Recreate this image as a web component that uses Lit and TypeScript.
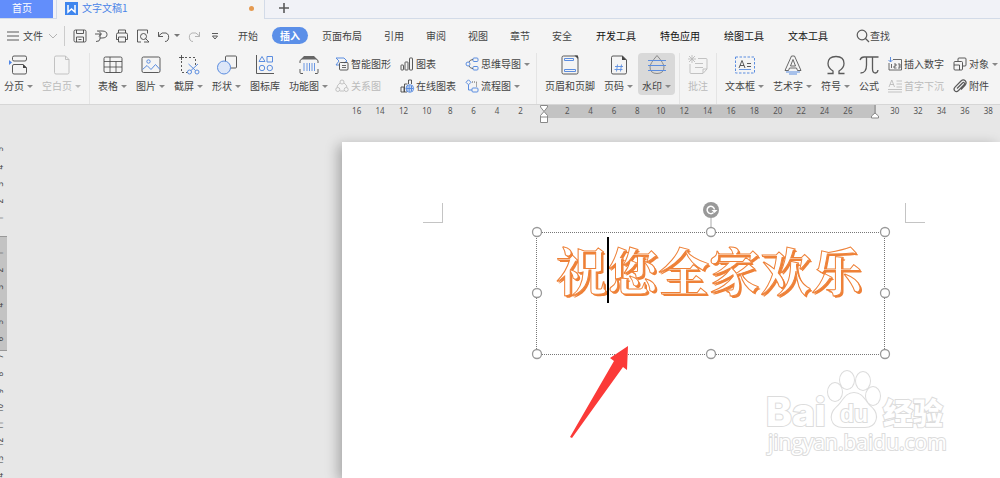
import { LitElement, html, css, svg, nothing } from "lit";
import { customElement, property } from "lit/decorators.js";

const ICONS: Record<string, any> = {
  pageBreak: svg`<path class="d" d="M3.500 4.500V2.500q0-1.500 1.500-1.500h11q1.500 0 1.500 1.500V4q0 2-1.500 2H5q-1.500 0-1.500-1.500M14 9.500H5q-1.500 0-1.500 1.500v6.500q0 1.500 1.500 1.500h11q1.500 0 1.500-1.500V13z"/><path class="k" d="M14 9v4h4z"/><path class="bf" d="M0 5l3 2.500L0 10z"/>`,
  blank: svg`<path class="d" d="M4 1h9.500l3.500 3.500v13q0 1.500-1.500 1.500H4q-1.500 0-1.500-1.500v-15Q2.500 1 4 1zM13.500 1v3.500H17"/>`,
  table: svg`<rect class="d" x="1" y="2" width="18" height="15.500" rx="1.500"/><path class="d t" d="M1 6.500h18M1 12h18M7 2v15.500M13 6.500v11"/>`,
  picture: svg`<rect class="d" x="1" y="2" width="18" height="15.500" rx="1.500"/><circle class="b" cx="7.500" cy="6.500" r="1.700"/><path class="b" d="M1.500 14.500l4.500-4 4 4 4.500-5 4.500 5"/>`,
  shot: svg`<path class="d" stroke-dasharray="2 2" d="M6 2.500h10.500V10M2.500 6v11.500h6"/><path class="d" d="M0 2.500h5M2.500 0v5"/><circle class="b" cx="10.500" cy="17" r="2"/><circle class="b" cx="18" cy="17" r="2"/><path class="b" d="M9.500 9l7 6.500M19 9l-7 6.500"/>`,
  shapes: svg`<rect class="d" x="8.500" y="1" width="11" height="12" rx="1"/><circle cx="7" cy="12.500" r="6.500" fill="#dce6f8" stroke="#5b8de0"/>`,
  gallery: svg`<path class="d" d="M1.500 0v18.500H19"/><path class="b" d="M7 1.500l3 5H4zM12 1.500h5.500V7H12z"/><circle class="b" cx="7" cy="13" r="2.700"/><circle class="b" cx="14.800" cy="13" r="2.700"/>`,
  barcode: svg`<path class="d" d="M1 8V5.500L5 2h10l4 3.500V8M1 14v3.500q0 1 1 1h2M19 14v3.500q0 1-1 1h-2"/><path d="M5 1h10l3 3.500H2z" fill="#666"/><path class="b t" d="M5 8v8M8 8v8M10.500 8v8M13 8v8M15.500 8v8"/>`,
  header: svg`<rect class="d" x="2" y="1" width="16" height="18" rx="1.500"/><path class="b" d="M4.500 3.500h9v2h-9zM4.500 14.500h11v2h-11z"/><path class="k" d="M14.500 0.500H18V4z"/>`,
  pageNo: svg`<path class="d" d="M4 1h9.500l4 4v12.500q0 1.500-1.500 1.500H4q-1.500 0-1.500-1.500v-15Q2.500 1 4 1z"/><path class="k" d="M13 0.500v4.500h4.500z"/><path class="b t" d="M8.500 9.500l-1 7M12.500 9.500l-1 7M6 11.500h8M5.500 14.500h8"/>`,
  water: svg`<path stroke="#8a8a8a" d="M10 .5Q3 8.500 3 12q0 6.500 7 6.500t7-6.500Q17 8.500 10 .5z"/><path class="b" d="M1 5.500h18M1 10.500h18M1 15.500h18"/>`,
  comment: svg`<path class="d" d="M10 3.500h8q1 0 1 1V14l-4 4.500H3q-1 0-1-1V9M7 8.500h8M7 12.500h8M15 18v-4h4M0 4h8M4 0v8M1 1l6 6M7 1L1 7"/>`,
  textbox: svg`<rect class="b" stroke-dasharray="2.500 1.500" x="0.500" y="2" width="19" height="16"/><path class="d" d="M4 13l3-7.500L10 13M5 10.500h4M12 8.500h4M12 11.500h4"/><path class="b t" d="M4 14.500h12"/>`,
  art: svg`<path class="d t" d="M8.500 1h3L18 15.500h-3.500L13.500 13h-7l-1 2.500H2zM10 4.500L7.500 11h5z"/><path class="b" d="M3 17h14M6 19h8"/>`,
  omega: svg`<path class="d" stroke-width="1.300" d="M1.500 18.500H7v-2.500Q2 13 2 8.500 2 1.500 10 1.500t8 7q0 4.500-5 7.500v2.500h5.500"/>`,
  pi: svg`<path class="d" stroke-width="1.300" d="M1 5q1-3 4-3h14.500M7.500 2v8q0 8-6 8M13.500 2v12q0 4 3 4 2 0 2.500-3"/>`,
  smart: svg`<path class="b" d="M1 1h8l3 3-3 2M1 1l3 3-3 4h3"/><rect class="d" x="4.500" y="5.500" width="8.500" height="7.500" rx="1"/><path class="d t" d="M7 8.500h4M7 10.500h4"/>`,
  relation: svg`<circle class="d" cx="7" cy="3" r="2"/><circle class="d" cx="2.800" cy="10.500" r="2"/><circle class="d" cx="11.200" cy="10.500" r="2"/><path class="d" d="M5 4Q2 6 2 8.500M9 4q3 2 3 4.500M5 12h4"/>`,
  chart: svg`<rect class="d" x="1" y="8" width="2.500" height="5" rx=".5"/><rect class="d" x="5" y="5" width="3" height="8" rx=".5"/><rect class="d" x="9.500" y="1" width="3" height="12" rx=".5"/>`,
  netChart: svg`<path class="d" d="M1 8h3v5H1zM4.500 13V5h3M8.500 5V1h3v4M4 13h3"/><circle class="b" cx="9.800" cy="9.500" r="3.800"/><path class="b" d="M6 9.500h7.500M9.800 6v7M8 7v5M11.500 7v5"/>`,
  mind: svg`<circle class="b" cx="3" cy="7" r="2"/><rect class="b" x="8" y="1" width="5" height="3.500" rx="1"/><rect class="b" x="8" y="9.500" width="5" height="3.500" rx="1"/><path class="d t" d="M4 5q1-2.500 4-2.500M4 9q1 2.500 4 2.500"/>`,
  flow: svg`<path class="b" d="M3.500 0.800L6 3.300 3.500 5.800 1 3.300z"/><rect class="b" x="7" y="9" width="6" height="4" rx="1"/><path class="b" d="M3.500 6v5H7"/><path class="d" stroke-dasharray="1 1" d="M7 3h4.500v5"/>`,
  number: svg`<path class="d t" d="M5 2.500h8.500V13H1V6M3.500 7v4M6 7h2v2H6v2h2.500M10 7h2v4h-2M10.500 9H12"/><path class="b" d="M2.500 0v5M.500 3l2 2 2-2"/>`,
  dropcap: svg`<path class="d" d="M1 8L3.800 1l2.700 7M2 5.500h4M8.500 2H14M8.500 5H14M8.500 8H14M0 10.500h14M0 13h14"/>`,
  object: svg`<path class="d" d="M5 4V2q0-1 1-1h6q1 0 1 1v6q0 1-1 1h-2"/><rect class="d" x="1" y="4.500" width="8.500" height="8.500" rx="1"/><path class="d" d="M1 8h5.500v5"/>`,
  clip: svg`<path class="d" stroke-width="1.200" d="M4 9.500l5.500-5.500q1-1 1.800-.2t-.2 1.800L5.500 11.500q-2 2-3.700.3t.2-3.700L8 2q2.300-2 4.200-.2t0 4.200L8 10.500"/>`,
  save: svg`<rect class="d" x="1" y="1" width="12" height="12" rx="1.500"/><path class="d" d="M3.500 1v3.500h7V1M3.500 13V8h7v5M5.500 10.500h3"/>`,
  export: svg`<path class="d" d="M3 2h5q5 0 5 3.500T8 9H6M1 5h6M5 2.500L7.500 5 5 7.500M6 5v5q0 2.500-4 2.500"/>`,
  print: svg`<path class="d" d="M3.500 4V1h7v3M3.500 10.500H1.500V5.500q0-1.500 1.500-1.500h8q1.500 0 1.500 1.500v5h-2M3.500 8h7v5h-7z"/>`,
  preview: svg`<path class="d" d="M5 13H1.500V1h10v3.500"/><circle class="d" cx="7.500" cy="7.500" r="3"/><path class="d" d="M9.500 9.500L13 13H8"/>`,
  undo: svg`<path class="d" d="M1.500 3v4.500H6M1.500 7Q5 2.500 9 4t2 7q-1 1.500-3 1.500"/>`,
  redo: svg`<path class="d" d="M12.500 3v4.500H8M12.500 7Q9 2.500 5 4t-2 7q1 1.500 3 1.500"/>`,
  more: svg`<path class="d" d="M4 4.500h6"/><path class="d" d="M4.500 7h5L7 10z"/>`,
  search: svg`<circle class="d" stroke-width="1.200" cx="6" cy="6" r="4.800"/><path class="d" stroke-width="1.200" d="M9.500 9.500L13 13"/>`,
  menu: svg`<path class="d" d="M1 3h12M1 7h12M1 11h12"/>`,
  down: svg`<path class="d" d="M3 5l4 4 4-4"/>`,
  plus: svg`<path class="d" stroke-width="1.600" d="M7 2v10M2 7h10"/>`,
};

const iconStyles = css`
  svg { display: block; flex: none; overflow: visible; fill: none; }
  .d { fill: none; stroke: currentColor; stroke-opacity: 0.88; }
  .b { fill: none; stroke: #5b8de0; }
  .t { stroke-width: 0.9; }
  .k { fill: currentColor; }
  .bf { fill: #4f86e6; }
  button { font: inherit; color: inherit; background: none; border: 0; padding: 0; margin: 0; white-space: nowrap; }
`;

const icon = (name: string, size = 14) =>
  html`<svg width=${size} height=${size} viewBox="0 0 ${size} ${size}" aria-hidden="true">${ICONS[name]}</svg>`;

@customElement("ribbon-button")
export class RibbonButton extends LitElement {
  @property() icon = "";
  @property() label = "";
  @property({ type: Boolean }) caret = false;
  @property({ type: Boolean }) small = false;
  @property({ type: Boolean, reflect: true }) off = false;
  @property({ type: Boolean }) active = false;

  static styles = [
    iconStyles,
    css`
      :host { display: block; }
      :host([off]) { color: #bbb; }
      :host([off]) .b { stroke: #bbb; }
      .big { display: flex; flex-direction: column; align-items: center; gap: 4px; padding: 2px 0; height: 42px; }
      .big.active { background: #d9d9d9; border-radius: 4px; padding: 2px 4px; margin: 0 -4px; }
      .small { display: flex; align-items: center; gap: 2px; height: 22px; }
      .label { display: flex; align-items: center; gap: 3px; line-height: 14px; }
      .caret { border: 3px solid transparent; border-top-color: #888; border-bottom: 0; }
      :host([off]) .caret { border-top-color: #bbb; }
    `,
  ];

  render() {
    return html`<button class="${this.small ? "small" : "big"} ${this.active ? "active" : ""}" ?disabled=${this.off}>
      ${icon(this.icon, this.small ? 14 : 20)}
      <span class="label">${this.label}${this.caret ? html`<span class="caret"></span>` : nothing}</span>
    </button>`;
  }
}

type Tool = [icon: string, label: string, caret?: boolean, off?: boolean, active?: boolean];

const tool = (t: Tool, small = false) =>
  html`<ribbon-button .icon=${t[0]} .label=${t[1]} .caret=${!!t[2]} .off=${!!t[3]} .active=${!!t[4]} .small=${small}></ribbon-button>`;

const column = (...tools: Tool[]) => html`<div class="stack">${tools.map((t) => tool(t, true))}</div>`;

const TABS = ["页面布局", "引用", "审阅", "视图", "章节", "安全"];
const TOOL_TABS = ["开发工具", "特色应用", "绘图工具", "文本工具"];

@customElement("app-root")
export class AppRoot extends LitElement {
  static styles = [
    iconStyles,
    css`
      :host {
        display: flex; flex-direction: column; height: 100vh; overflow: hidden;
        font: 10px/14px "Noto Sans", "Noto Sans CJK SC", sans-serif; color: #444; background: #e7e7e7;
      }
      .tabs { display: flex; flex: none; height: 19px; background: #f1f2f7; border-bottom: 1px solid #d3dbe8; box-sizing: border-box; font-family: "Noto Sans CJK SC", sans-serif; }
      .home { width: 53px; height: 18px; padding: 0 9px 3px 0; background: #628efb; color: #fff; }
      .doc { display: flex; align-items: center; gap: 4px; width: 209px; height: 19px; box-sizing: border-box; margin-left: 3px; padding: 0 10px 3px 8px; background: #f4f4f4; border: solid #d3dbe8; border-width: 0 1px; color: #4a84e8; }
      .logo { width: 13px; height: 13px; background: #3f86ee; }
      .dirty { width: 5px; height: 5px; margin-left: auto; border-radius: 50%; background: #e59a50; }
      .add { padding: 0 12px 3px; color: #444; }
      .menu { display: flex; flex: none; align-items: center; height: 33px; padding-left: 6px; background: #f4f4f4; font-family: "Noto Sans CJK SC", sans-serif; }
      .file { display: flex; align-items: center; gap: 3px; }
      .pale { color: #aaa; }
      .quick { display: flex; align-items: center; gap: 7px; margin-left: 4px; padding-left: 8px; border-left: 1px solid #ccc; height: 20px; }
      .undo { display: flex; align-items: center; gap: 3px; }
      .caret { border: 3px solid transparent; border-top-color: #777; border-bottom: 0; }
      .nav { display: flex; align-items: center; gap: 22px; margin-left: 16px; }
      .on { height: 17px; margin: 0 -8px; padding: 0 8px; border-radius: 9px; background: #5b8fe8; color: #fff; font-weight: 700; }
      .tools { display: flex; gap: 24px; margin-left: 2px; color: #111; }
      .find { display: flex; align-items: center; margin-left: 6px; }
      .ribbon { display: flex; flex: none; align-items: flex-start; height: 53px; padding: 1px 0 0 4px; box-sizing: border-box; background: #f4f4f4; border-bottom: 1px solid #d6d6d6; font-family: "Noto Sans CJK SC", sans-serif; }
      .group { display: flex; gap: 9px; padding-right: 8px; }
      .group + .group { padding-left: 8px; border-left: 1px solid #e4e4e4; height: 51px; }
      .group.mixed { padding-right: 6px; }
      .columns { display: flex; gap: 9px; margin-left: -2px; }
      .stack { display: flex; flex-direction: column; }
      .ruler { position: relative; display: grid; grid-template-columns: repeat(28, 1fr); flex: none; height: 14px; padding-left: 345px; text-align: center; font-size: 8px; line-height: 12px; color: #555; }
      .band { position: absolute; left: 545px; top: 0; width: 331px; height: 13px; background: #c3c3c3; }
      .num { position: relative; }
      .mark { position: absolute; top: 0; left: 540px; }
      .mark.end { left: 871px; }
      .body { display: flex; flex: 1; min-height: 0; }
      .side { position: relative; display: grid; grid-auto-rows: 1fr; flex: none; width: 7px; padding-top: 22px; margin-bottom: -8px; overflow: hidden; font-size: 8px; line-height: 10px; color: #444; }
      .sideband { position: absolute; left: 0; top: 117px; width: 7px; height: 115px; box-sizing: border-box; background: #c3c3c3; border: solid #999; border-width: 1px 0; }
      .vnum { position: relative; justify-self: start; align-self: center; margin-left: -5px; writing-mode: vertical-rl; transform: rotate(180deg); }
      .work { display: flex; flex: 1; min-width: 0; padding: 23px 0 0 335px; overflow: hidden; }
      .page { position: relative; flex: 1; background: #fff; box-shadow: -4px 3px 12px rgba(0, 0, 0, 0.28); }
      .corner { position: absolute; top: 61px; width: 20px; height: 20px; box-sizing: border-box; border: solid #c4c4c4; border-width: 0 1px 1px 0; left: 81px; }
      .corner.right { left: 563px; border-width: 0 0 1px 1px; }
      .frame { position: absolute; left: 194px; top: 90px; width: 349px; height: 123px; box-sizing: border-box; padding: 5px 19px; border: 1px dotted #777; }
      .art {
        outline: 0; white-space: nowrap; font: 700 51px/62px "Noto Serif CJK SC", "Noto Sans CJK SC", serif;
        color: #fff; -webkit-text-stroke: 1px #ee8138; text-shadow: 1px 1px #ee8138, 2px 2px #ee8138;
      }
      .cursor { position: absolute; left: 70px; top: 4px; width: 2px; height: 66px; background: #000; }
      .handles { position: absolute; left: -7px; top: -32px; }
      .arrow { position: absolute; left: 227px; top: 203px; }
      .brand { position: absolute; left: 420px; top: 224px; }
      .big { font: 800 39px Inter, sans-serif; }
      .du { font: 700 23px "Liberation Sans", sans-serif; }
      .cn { font: 900 30px "Noto Sans CJK SC", sans-serif; }
      .url { font: 21px "Open Sans", sans-serif; }
      .line { fill: #fff; stroke: #dcdcdc; paint-order: stroke; stroke-width: 2; }
    `,
  ];

  render() {
    const marks = Array.from({ length: 28 }, (_, i) => Math.abs(i - 8) * 2);
    const rows = Array.from({ length: 20 }, (_, i) => Math.abs(i - 5));
    const dots = [[7, 31], [181, 31], [355, 31], [7, 92], [355, 92], [7, 153], [181, 153], [355, 153]];
    return html`
      <div class="tabs">
        <button class="home">首页</button>
        <div class="doc">
          <svg class="logo" width="13" height="13" viewBox="0 0 13 13"><path d="M3 3v7l3.500-3L10 10V3" stroke="#fff" stroke-width="1.500"/></svg>
          <span>文字文稿1</span><span class="dirty"></span>
        </div>
        <button class="add" aria-label="新建">${icon("plus")}</button>
      </div>
      <div class="menu">
        <button class="file">${icon("menu")}<span>文件</span><span class="pale">${icon("down")}</span></button>
        <div class="quick">
          ${["save", "export", "print", "preview"].map((n) => html`<button aria-label=${n}>${icon(n)}</button>`)}
          <button class="undo" aria-label="undo">${icon("undo")}<span class="caret"></span></button>
          <button class="pale" aria-label="redo">${icon("redo")}</button>
          <button aria-label="more">${icon("more")}</button>
        </div>
        <nav class="nav">
          <button>开始</button><button class="on">插入</button>
          ${TABS.map((t) => html`<button>${t}</button>`)}
          <div class="tools">${TOOL_TABS.map((t) => html`<button>${t}</button>`)}</div>
          <button class="find">${icon("search")}查找</button>
        </nav>
      </div>
      <div class="ribbon">
        <div class="group">${tool(["pageBreak", "分页", true])}${tool(["blank", "空白页", true, true])}</div>
        <div class="group mixed">
          ${tool(["table", "表格", true])}${tool(["picture", "图片", true])}${tool(["shot", "截屏", true])}
          ${tool(["shapes", "形状", true])}${tool(["gallery", "图标库"])}${tool(["barcode", "功能图", true])}
          <div class="columns">
            ${column(["smart", "智能图形"], ["relation", "关系图", false, true])}
            ${column(["chart", "图表"], ["netChart", "在线图表"])}
            ${column(["mind", "思维导图", true], ["flow", "流程图", true])}
          </div>
        </div>
        <div class="group">
          ${tool(["header", "页眉和页脚"])}${tool(["pageNo", "页码", true])}${tool(["water", "水印", true, false, true])}
        </div>
        <div class="group">${tool(["comment", "批注", false, true])}</div>
        <div class="group">
          ${tool(["textbox", "文本框", true])}${tool(["art", "艺术字", true])}${tool(["omega", "符号", true])}${tool(["pi", "公式"])}
          ${column(["number", "插入数字"], ["dropcap", "首字下沉", false, true])}
          ${column(["object", "对象", true], ["clip", "附件"])}
        </div>
      </div>
      <div class="ruler">
        <div class="band"></div>
        ${marks.map((n, i) => html`<span class="num">${i === 8 || i === 22 ? "" : n}</span>`)}
        <svg class="mark" width="8" height="19" viewBox="0 0 8 19"><path d="M.5 .5h7V2L4 6.500.5 2zM4 6.500l3.500 4v7h-7v-7zM.5 12h7" fill="#fff" stroke="#888"/></svg>
        <svg class="mark end" width="8" height="14" viewBox="0 0 8 14"><path d="M4 0v8M4 8l3.500 3v2h-7v-2z" fill="#fff" stroke="#888"/></svg>
      </div>
      <div class="body">
        <div class="side">
          <div class="sideband"></div>
          ${rows.map((n) => html`<span class="vnum">${n || ""}</span>`)}
        </div>
        <main class="work">
          <div class="page">
            <div class="corner"></div>
            <div class="corner right"></div>
            <div class="frame">
              <div class="art" contenteditable="true" spellcheck="false">祝您全家欢乐</div>
              <div class="cursor"></div>
              <svg class="handles" width="362" height="160" viewBox="0 0 362 160">
                <path d="M181 17v10" stroke="#aaa"/>
                <circle cx="181" cy="9" r="8" fill="#999"/>
                <path d="M183.500 11.500a3.700 3.700 0 1 1 1-3" stroke="#fff" stroke-width="1.500"/><path d="M181.500 9h6l-3 3z" fill="#fff"/>
                ${dots.map(([x, y]) => svg`<circle cx=${x} cy=${y} r="4.500" fill="#fff" stroke="#999" stroke-width="1.300"/>`)}
              </svg>
            </div>
            <svg class="arrow" width="62" height="94" viewBox="0 0 62 94"><path d="M59 1L41 13l4 3L1 92l2 1 51-71 4 3z" fill="#fb3a38"/></svg>
            <svg class="brand" width="190" height="94" viewBox="0 0 190 94">
              <text class="big line" x="4" y="60">Bai</text>
              <g class="line">
                <ellipse cx="73" cy="26" rx="7" ry="9"/><ellipse cx="85" cy="14" rx="7" ry="9"/>
                <ellipse cx="101" cy="15" rx="7" ry="9"/><ellipse cx="111" cy="30" rx="7" ry="9"/>
                <path d="M92 27c9 0 11 9 17 14 9 8 5 20-6 20H81c-12 0-15-12-6-20 6-5 8-14 17-14z"/>
              </g>
              <text class="du line" x="78" y="56">du</text>
              <text class="cn line" x="121" y="58">经验</text>
              <text class="url line" x="6" y="84">jingyan.baidu.com</text>
            </svg>
          </div>
        </main>
      </div>
    `;
  }
}
